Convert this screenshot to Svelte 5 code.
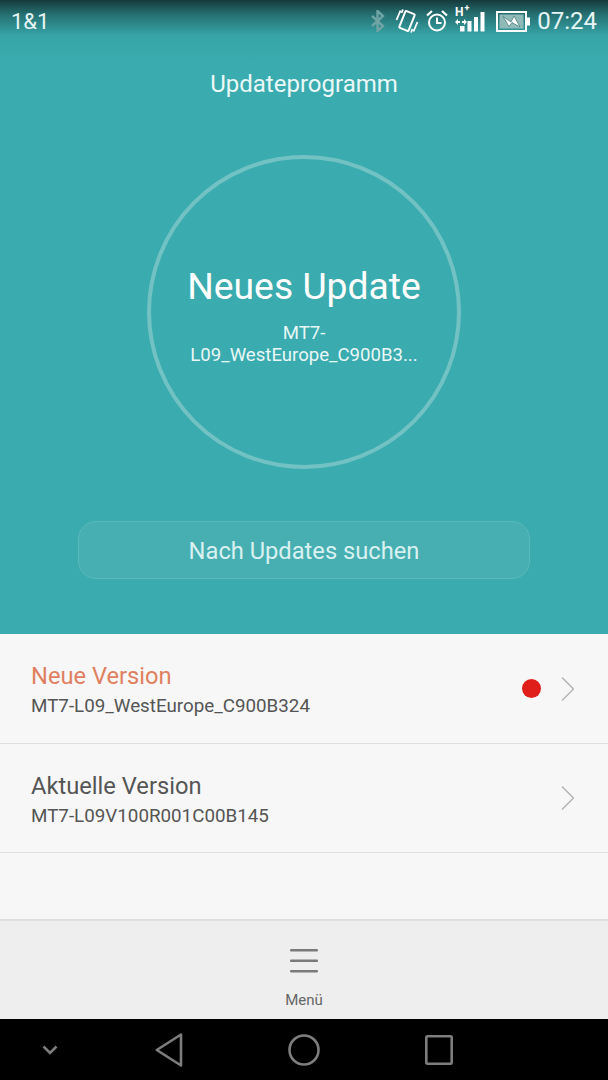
<script>
	const versions = [
		{ title: 'Neue Version', value: 'MT7-L09_WestEurope_C900B324', isNew: true },
		{ title: 'Aktuelle Version', value: 'MT7-L09V100R001C00B145', isNew: false }
	];
</script>

<div class="screen">
	<section class="hero">
		<header class="status">
			<span class="carrier">1&amp;1</span>
			<div class="status-right">
				<svg class="ic-bt" width="16" height="22" viewBox="0 0 16 22" fill="none" stroke="#6fa3a4" stroke-width="2.4">
					<path d="M2 6l11 10-5.500 5V1L13 6 2 16" />
				</svg>
				<svg class="ic-vib" width="24" height="26" viewBox="0 0 24 26" fill="none" stroke="#fff">
					<rect x="7" y="4" width="10" height="18" rx="1" stroke-width="2" transform="rotate(22 12 13)" />
					<path d="M5.500 2.500L1.500 12M8 1.500L6.500 5M18.500 23.500l4-9.500M16 24.500l1.500-3.500" stroke-width="1.800" />
				</svg>
				<svg class="ic-alarm" width="22" height="24" viewBox="0 0 22 24" fill="none" stroke="#fff">
					<circle cx="11" cy="13.500" r="8" stroke-width="2" />
					<path d="M11 8.500v5.500h4.500" stroke-width="2" />
					<path d="M1 6.500l5-4.500M21 6.500l-5-4.500" stroke-width="2.200" />
				</svg>
				<svg class="ic-signal" width="30" height="34" viewBox="0 0 30 34" fill="#fff">
					<text class="hplus" x="0" y="12">H</text>
					<text class="hplus-sm" x="9.500" y="7">+</text>
					<path d="M0 18l3-3v2h2v2H3v2zM12 18l-3 3v-2H7v-2h2v-2z" />
					<rect x="5" y="22" width="4.500" height="5.500" />
					<rect x="12.500" y="17" width="4" height="10.500" />
					<rect x="19" y="13" width="4" height="14.500" />
					<rect x="25.500" y="8" width="4" height="19.500" />
				</svg>
				<svg class="ic-batt" width="34" height="21" viewBox="0 0 34 21" fill="none">
					<rect x="1" y="1" width="29" height="19" stroke="#fff" stroke-width="2" />
					<rect x="3.500" y="3.500" width="24" height="14" fill="#8fbab7" />
					<rect x="31" y="6.500" width="3" height="8" fill="#fff" />
					<path d="M7 5.500l8 5.500 3-6 6 11-8-4.500-3 4z" fill="#fff" stroke="#4c7f80" stroke-width="0.800" />
				</svg>
				<span class="clock">07:24</span>
			</div>
		</header>

		<h1 class="title">Updateprogramm</h1>

		<div class="ring">
			<div class="ring-head">Neues Update</div>
			<div class="ring-sub">MT7-<br />L09_WestEurope_C900B3...</div>
		</div>

		<button class="check">Nach Updates suchen</button>
	</section>

	<section class="list">
		{#each versions as v}
			<div class="row">
				<div class="row-text">
					<div class="row-title" class:accent={v.isNew}>{v.title}</div>
					<div class="row-value">{v.value}</div>
				</div>
				{#if v.isNew}
					<span class="dot"></span>
				{/if}
				<svg class="chev" width="13" height="26" viewBox="0 0 13 26" fill="none" stroke="#b4b4b4" stroke-width="1.500">
					<path d="M1 1.500L12.500 13 1 24.500" />
				</svg>
			</div>
		{/each}
	</section>

	<footer class="menu-bar">
		<svg width="28" height="24" viewBox="0 0 28 24" fill="#7a7a7a">
			<rect x="0" y="0" width="28" height="2.600" rx="1" />
			<rect x="0" y="10.500" width="28" height="2.600" rx="1" />
			<rect x="0" y="21" width="28" height="2.600" rx="1" />
		</svg>
		<span class="menu-label">Menü</span>
	</footer>

	<nav class="nav">
		<svg class="nav-down" width="16" height="10" viewBox="0 0 16 10" fill="none" stroke="#7d7d7d" stroke-width="2.600">
			<path d="M1.500 1.500L8 8l6.500-6.500" />
		</svg>
		<svg class="nav-back" width="28" height="34" viewBox="0 0 28 34" fill="none" stroke="#7d7d7d" stroke-width="2.600" stroke-linejoin="round">
			<path d="M26 1.500V32.500L1.800 17z" />
		</svg>
		<svg class="nav-home" width="32" height="32" viewBox="0 0 32 32" fill="none" stroke="#7d7d7d" stroke-width="2.600">
			<circle cx="16" cy="16" r="14.500" />
		</svg>
		<svg class="nav-recent" width="28" height="30" viewBox="0 0 28 30" fill="none" stroke="#7d7d7d" stroke-width="2.600">
			<rect x="1.300" y="1.300" width="25.400" height="27.400" rx="1" />
		</svg>
	</nav>
</div>

<style>
	:global(body) {
		margin: 0;
	}
	.screen {
		width: 608px;
		height: 1080px;
		display: flex;
		flex-direction: column;
		font-family: Roboto, 'Liberation Sans', sans-serif;
		background: #f7f7f7;
		overflow: hidden;
	}
	.hero {
		height: 634px;
		flex-shrink: 0;
		display: flex;
		flex-direction: column;
		align-items: center;
		color: #fff;
		background: linear-gradient(#163a3c 0, #256e70 14px, #37a5a8 36px, #3aabae 60px);
	}
	.status {
		width: 100%;
		height: 42px;
		display: flex;
		justify-content: space-between;
		align-items: center;
		padding: 0 11px;
		box-sizing: border-box;
	}
	.carrier {
		font-size: 22px;
		color: #e6f5f4;
	}
	.status-right {
		display: flex;
		align-items: center;
	}
	.ic-bt {
		margin-right: 9px;
	}
	.ic-vib {
		margin-right: 7px;
	}
	.ic-alarm {
		margin-right: 7px;
	}
	.ic-signal {
		margin-right: 11px;
	}
	.hplus {
		font-size: 12px;
		font-weight: 700;
	}
	.hplus-sm {
		font-size: 9px;
		font-weight: 700;
	}
	.ic-batt {
		margin-right: 7px;
	}
	.clock {
		font-size: 24px;
		color: #e6f5f4;
	}
	.title {
		margin: 28px 0 0;
		font-size: 24px;
		font-weight: 400;
		line-height: 28px;
		color: #eaf8f7;
	}
	.ring {
		width: 314px;
		height: 314px;
		margin-top: 57px;
		box-sizing: border-box;
		border: 4px solid #72c2c4;
		border-radius: 50%;
		display: flex;
		flex-direction: column;
		align-items: center;
	}
	.ring-head {
		margin-top: 106px;
		font-size: 37.300px;
		line-height: 42px;
	}
	.ring-sub {
		margin-top: 15px;
		font-size: 18.600px;
		line-height: 22px;
		text-align: center;
		color: #e9f7f6;
	}
	.check {
		width: 452px;
		height: 58px;
		margin-top: 52px;
		padding: 2px 0 0;
		font-family: inherit;
		font-size: 23.700px;
		color: #d9f1f0;
		background: #47afb2;
		border: 1px solid #5cb9bb;
		border-radius: 18px;
	}
	.list {
		flex: 1;
		border-bottom: 2px solid #dedede;
	}
	.row {
		height: 109px;
		display: flex;
		align-items: center;
		padding: 0 34px 0 31px;
		border-bottom: 1px solid #dfdfdf;
	}
	.row + .row {
		height: 108px;
	}
	.row-text {
		flex: 1;
		padding-top: 2px;
	}
	.row-title {
		font-size: 23.700px;
		line-height: 30px;
		color: #555;
	}
	.row-title.accent {
		color: #e0805f;
	}
	.row-value {
		margin-top: 3px;
		font-size: 18.800px;
		line-height: 24px;
		color: #555;
	}
	.dot {
		width: 19px;
		height: 19px;
		margin-right: 20px;
		background: #e01e1a;
		border-radius: 50%;
	}
	.menu-bar {
		height: 98px;
		flex-shrink: 0;
		display: flex;
		flex-direction: column;
		align-items: center;
		padding-top: 28px;
		box-sizing: border-box;
		background: #eeeeee;
	}
	.menu-label {
		margin-top: 18px;
		font-size: 15px;
		line-height: 18px;
		color: #666;
	}
	.nav {
		height: 61px;
		flex-shrink: 0;
		background: #000;
		display: flex;
		align-items: center;
		padding-left: 42px;
		box-sizing: border-box;
	}
	.nav-back {
		margin-left: 97px;
	}
	.nav-home {
		margin-left: 105px;
	}
	.nav-recent {
		margin-left: 105px;
	}
</style>
